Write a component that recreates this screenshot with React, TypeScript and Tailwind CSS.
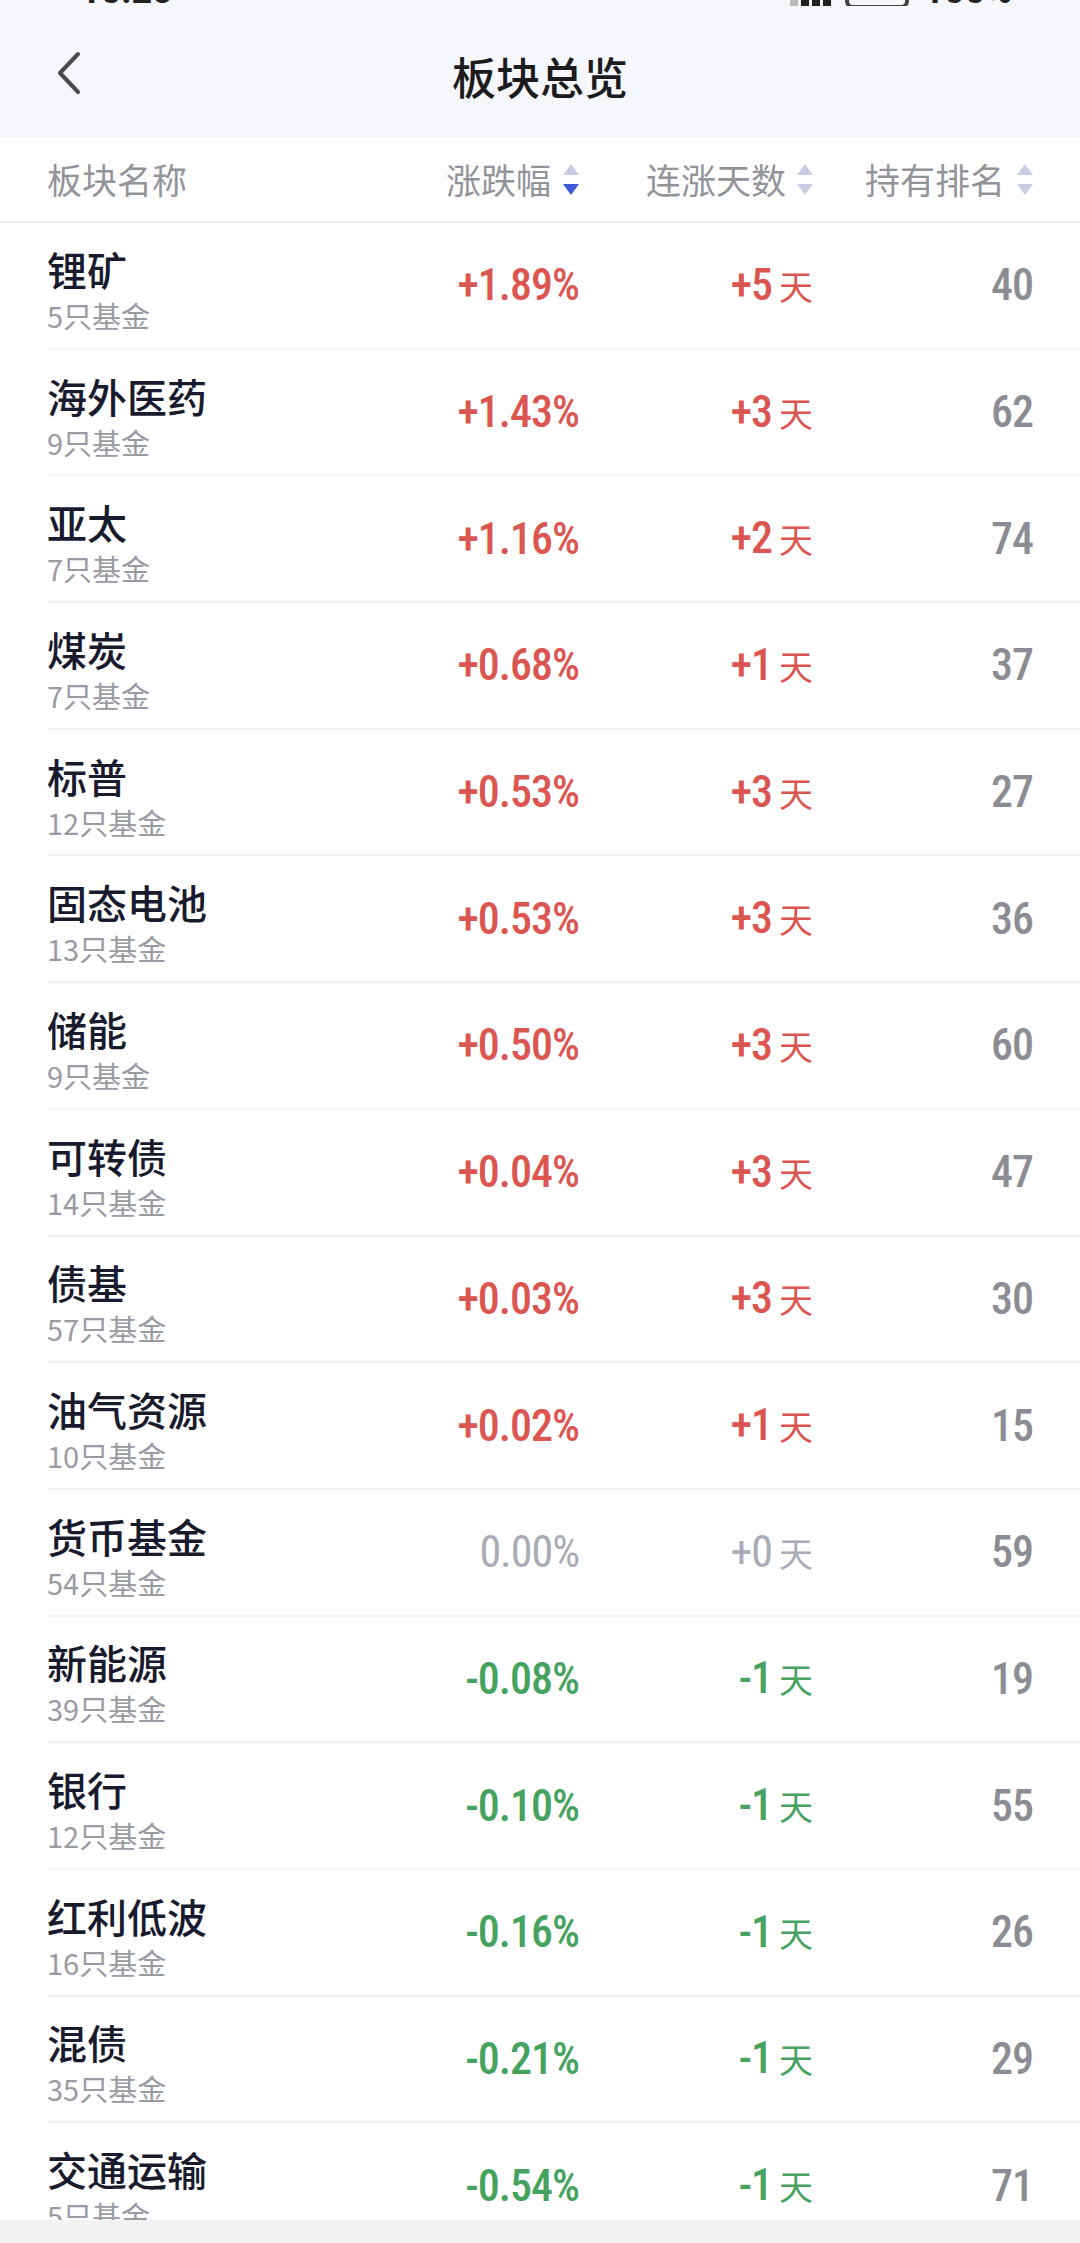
import React from "react";

type Row = { name: string; count: number; pct: string; days: string; rank: number; dir: 1 | 0 | -1 };

const rows: Row[] = [
  { name: "锂矿", count: 5, pct: "+1.89%", days: "+5", rank: 40, dir: 1 },
  { name: "海外医药", count: 9, pct: "+1.43%", days: "+3", rank: 62, dir: 1 },
  { name: "亚太", count: 7, pct: "+1.16%", days: "+2", rank: 74, dir: 1 },
  { name: "煤炭", count: 7, pct: "+0.68%", days: "+1", rank: 37, dir: 1 },
  { name: "标普", count: 12, pct: "+0.53%", days: "+3", rank: 27, dir: 1 },
  { name: "固态电池", count: 13, pct: "+0.53%", days: "+3", rank: 36, dir: 1 },
  { name: "储能", count: 9, pct: "+0.50%", days: "+3", rank: 60, dir: 1 },
  { name: "可转债", count: 14, pct: "+0.04%", days: "+3", rank: 47, dir: 1 },
  { name: "债基", count: 57, pct: "+0.03%", days: "+3", rank: 30, dir: 1 },
  { name: "油气资源", count: 10, pct: "+0.02%", days: "+1", rank: 15, dir: 1 },
  { name: "货币基金", count: 54, pct: "0.00%", days: "+0", rank: 59, dir: 0 },
  { name: "新能源", count: 39, pct: "-0.08%", days: "-1", rank: 19, dir: -1 },
  { name: "银行", count: 12, pct: "-0.10%", days: "-1", rank: 55, dir: -1 },
  { name: "红利低波", count: 16, pct: "-0.16%", days: "-1", rank: 26, dir: -1 },
  { name: "混债", count: 35, pct: "-0.21%", days: "-1", rank: 29, dir: -1 },
  { name: "交通运输", count: 5, pct: "-0.54%", days: "-1", rank: 71, dir: -1 },
];

function SortIcon({ active }: { active?: boolean }) {
  return (
    <svg width="16" height="31" viewBox="0 0 16 31" className="shrink-0">
      <path d="M8 0 L16 11 L0 11 Z" fill="#c9cce3" />
      <path d="M0 20 L16 20 L8 31 Z" fill={active ? "#3d5ad8" : "#c9cce3"} />
    </svg>
  );
}

function colorFor(dir: 1 | 0 | -1) {
  if (dir === 1) return "text-[#dc5651] font-medium";
  if (dir === -1) return "text-[#45a35f] font-medium";
  return "text-[#a9acb6] font-normal";
}

export default function App() {
  return (
    <div className="w-[1080px] h-[2243px] overflow-hidden flex flex-col bg-white font-['Noto_Sans_CJK_SC',sans-serif]">
      {/* Header */}
      <div className="h-[137px] shrink-0 bg-[#f6f7fb] flex flex-col">
        <div className="h-[6px] overflow-hidden shrink-0">
          <div className="-mt-[27px] flex items-center justify-between pl-[80px] pr-[68px] text-[36px] leading-[36px] font-bold text-[#222] font-['Roboto',sans-serif]">
            <span>10:25</span>
            <div className="flex items-end gap-[14px]">
              <span className="text-[26px]">4G</span>
              <div className="flex items-end gap-[3px]">
                <span className="w-[8px] h-[14px] bg-[#bbb]" />
                <span className="w-[8px] h-[20px] bg-[#222]" />
                <span className="w-[8px] h-[26px] bg-[#222]" />
                <span className="w-[8px] h-[32px] bg-[#222]" />
              </div>
              <span className="w-[64px] h-[30px] rounded-[8px] border-[4px] border-[#444]" />
              <span>100%</span>
            </div>
          </div>
        </div>
        <div className="flex-1 grid grid-cols-[1fr_auto_1fr] items-center">
          <div className="pl-[55px] pt-[2px]">
            <svg width="28" height="44" viewBox="0 0 28 44">
              <path d="M23 3 L5 22 L23 41" fill="none" stroke="#4a4b50" strokeWidth="4" strokeLinecap="round" strokeLinejoin="round" />
            </svg>
          </div>
          <div className="text-[44px] leading-[52px] font-medium text-[#1c1c1e] pt-[8px]">板块总览</div>
          <div />
        </div>
      </div>

      {/* Table header */}
      <div className="h-[86px] shrink-0 border-b-2 border-[#ececee] flex items-center pl-[47px] pr-[47px] text-[35px] text-[#93949a]">
        <div className="flex-1">板块名称</div>
        <div className="w-[200px] flex items-center justify-end gap-[12px]">
          <span>涨跌幅</span>
          <SortIcon active />
        </div>
        <div className="w-[234px] flex items-center justify-end gap-[11px]">
          <span>连涨天数</span>
          <SortIcon />
        </div>
        <div className="w-[220px] flex items-center justify-end gap-[12px]">
          <span>持有排名</span>
          <SortIcon />
        </div>
      </div>

      {/* Rows */}
      <div className="flex-1 overflow-hidden">
        {rows.map((r) => (
          <div key={r.name} className="h-[126.7px] pl-[47px]">
            <div className="h-full flex items-center border-b-2 border-[#f3f3f5] pr-[47px]">
              <div className="flex-1 min-w-0 flex flex-col pt-[3px]">
                <span className="text-[40px] leading-[56px] font-medium text-[#181a2e]">{r.name}</span>
                <span className="text-[29px] leading-[36px] text-[#9a9ba2]">{r.count}只基金</span>
              </div>
              <div
                className={`w-[200px] text-right text-[44px] leading-[52px] tracking-[-1px] font-['Roboto',sans-serif] font-stretch-semi-condensed ${colorFor(r.dir)}`}
              >
                {r.pct}
              </div>
              <div className={`w-[234px] flex items-baseline justify-end ${colorFor(r.dir)}`}>
                <span className="text-[44px] leading-[52px] tracking-[-1px] font-['Roboto',sans-serif] font-stretch-semi-condensed">{r.days}</span>
                <span className="text-[34px] leading-[52px] ml-[7px] font-normal">天</span>
              </div>
              <div className="w-[220px] text-right text-[44px] leading-[52px] tracking-[-1px] font-medium text-[#8b8c94] font-['Roboto',sans-serif] font-stretch-semi-condensed">
                {r.rank}
              </div>
            </div>
          </div>
        ))}
      </div>

      {/* Bottom bar */}
      <div className="h-[23px] shrink-0 bg-[#f2f2f2]" />
    </div>
  );
}
